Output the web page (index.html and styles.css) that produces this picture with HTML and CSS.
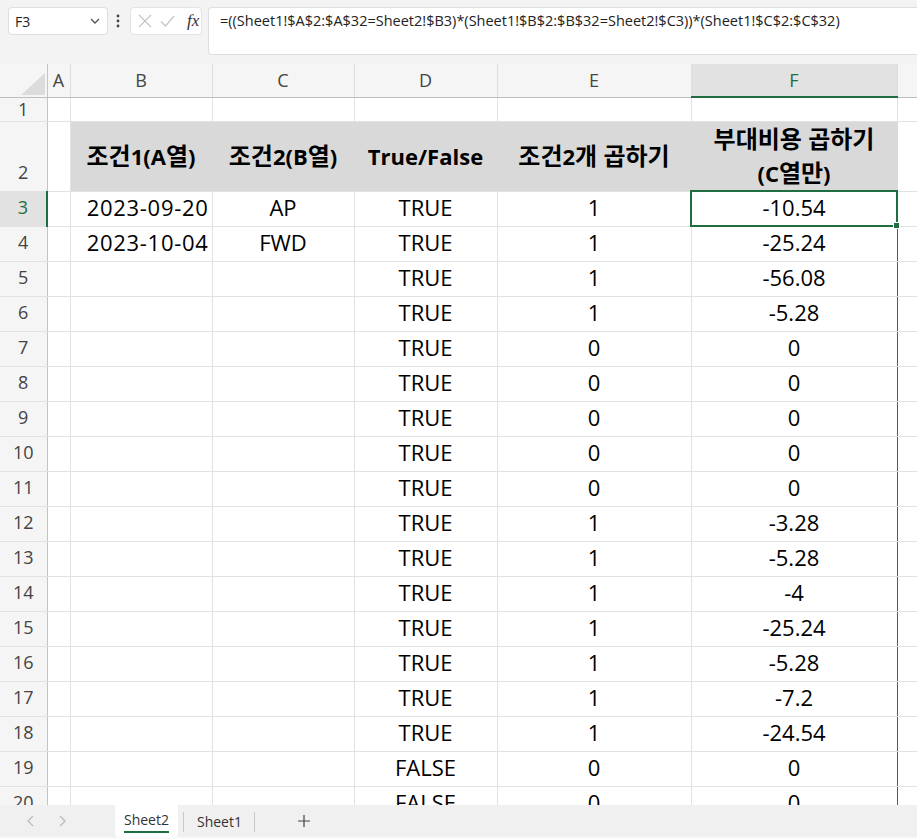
FILE: index.html
```html
<!DOCTYPE html>
<html lang="ko">
<head>
  <meta charset="UTF-8">
  <meta name="viewport" content="width=device-width, initial-scale=1.0">
  <title>Sheet2 - 부대비용 곱하기</title>
  <link rel="stylesheet" href="styles.css">
</head>
<body>
  <div class="topbar">
    <div class="namebox">
      <span>F3</span>
      <svg width="12" height="8" viewBox="0 0 12 8"><path d="M2 2 L6 6 L10 2" fill="none" stroke="#555" stroke-width="1.3"/></svg>
    </div>
    <div class="dots">
      <svg width="4" height="14" viewBox="0 0 4 14"><circle cx="2" cy="2" r="1.4" fill="#444"/><circle cx="2" cy="7" r="1.4" fill="#444"/><circle cx="2" cy="12" r="1.4" fill="#444"/></svg>
    </div>
    <div class="fxbox">
      <svg width="14" height="14" viewBox="0 0 14 14"><path d="M1 1 L13 13 M13 1 L1 13" stroke="#c4c4c4" stroke-width="1.2"/></svg>
      <svg width="15" height="14" viewBox="0 0 15 14"><path d="M1 7.5 L5.5 12 L14 2" fill="none" stroke="#c4c4c4" stroke-width="1.2"/></svg>
      <span class="fx">fx</span>
    </div>
    <div class="formula">=((Sheet1!$A$2:$A$32=Sheet2!$B3)*(Sheet1!$B$2:$B$32=Sheet2!$C3))*(Sheet1!$C$2:$C$32)</div>
  </div>

  <div class="sheet">
    <table class="grid">
      <colgroup>
        <col class="c-row"><col class="c-a"><col class="c-b"><col class="c-c"><col class="c-d"><col class="c-e"><col class="c-f"><col class="c-g">
      </colgroup>
      <thead>
        <tr>
          <th class="corner"><svg width="30" height="26" viewBox="0 0 30 26"><polygon points="28,2 28,24 4,24" fill="#dcdcdc"/></svg></th>
          <th>A</th><th>B</th><th>C</th><th>D</th><th>E</th><th class="sel">F</th><th class="last"></th>
        </tr>
      </thead>
      <tbody>
        <tr class="r1"><th>1</th><td></td><td></td><td></td><td></td><td></td><td></td><td></td></tr>
        <tr class="r2">
          <th>2</th><td></td>
          <td class="hd"><span class="ko">조건</span>1(A<span class="ko">열</span>)</td>
          <td class="hd"><span class="ko">조건</span>2(B<span class="ko">열</span>)</td>
          <td class="hd">True/False</td>
          <td class="hd"><span class="ko">조건</span>2<span class="ko">개 곱하기</span></td>
          <td class="hd"><span class="ko">부대비용 곱하기</span><br>(C<span class="ko">열만</span>)</td>
          <td></td>
        </tr>
        <tr><th class="sel">3</th><td></td><td class="date">2023-09-20</td><td>AP</td><td>TRUE</td><td>1</td><td class="spill active">-10.54</td><td></td></tr>
        <tr><th>4</th><td></td><td class="date">2023-10-04</td><td>FWD</td><td>TRUE</td><td>1</td><td class="spill">-25.24</td><td></td></tr>
        <tr><th>5</th><td></td><td></td><td></td><td>TRUE</td><td>1</td><td class="spill">-56.08</td><td></td></tr>
        <tr><th>6</th><td></td><td></td><td></td><td>TRUE</td><td>1</td><td class="spill">-5.28</td><td></td></tr>
        <tr><th>7</th><td></td><td></td><td></td><td>TRUE</td><td>0</td><td class="spill">0</td><td></td></tr>
        <tr><th>8</th><td></td><td></td><td></td><td>TRUE</td><td>0</td><td class="spill">0</td><td></td></tr>
        <tr><th>9</th><td></td><td></td><td></td><td>TRUE</td><td>0</td><td class="spill">0</td><td></td></tr>
        <tr><th>10</th><td></td><td></td><td></td><td>TRUE</td><td>0</td><td class="spill">0</td><td></td></tr>
        <tr><th>11</th><td></td><td></td><td></td><td>TRUE</td><td>0</td><td class="spill">0</td><td></td></tr>
        <tr><th>12</th><td></td><td></td><td></td><td>TRUE</td><td>1</td><td class="spill">-3.28</td><td></td></tr>
        <tr><th>13</th><td></td><td></td><td></td><td>TRUE</td><td>1</td><td class="spill">-5.28</td><td></td></tr>
        <tr><th>14</th><td></td><td></td><td></td><td>TRUE</td><td>1</td><td class="spill">-4</td><td></td></tr>
        <tr><th>15</th><td></td><td></td><td></td><td>TRUE</td><td>1</td><td class="spill">-25.24</td><td></td></tr>
        <tr><th>16</th><td></td><td></td><td></td><td>TRUE</td><td>1</td><td class="spill">-5.28</td><td></td></tr>
        <tr><th>17</th><td></td><td></td><td></td><td>TRUE</td><td>1</td><td class="spill">-7.2</td><td></td></tr>
        <tr><th>18</th><td></td><td></td><td></td><td>TRUE</td><td>1</td><td class="spill">-24.54</td><td></td></tr>
        <tr><th>19</th><td></td><td></td><td></td><td>FALSE</td><td>0</td><td class="spill">0</td><td></td></tr>
        <tr><th>20</th><td></td><td></td><td></td><td>FALSE</td><td>0</td><td class="spill">0</td><td></td></tr>
      </tbody>
    </table>
  </div>

  <div class="tabbar">
    <div class="nav">
      <svg width="10" height="14" viewBox="0 0 10 14"><path d="M7 2 L2 7 L7 12" fill="none" stroke="#bbb" stroke-width="1.3"/></svg>
      <svg width="10" height="14" viewBox="0 0 10 14"><path d="M3 2 L8 7 L3 12" fill="none" stroke="#bbb" stroke-width="1.3"/></svg>
    </div>
    <div class="tab active"><span>Sheet2</span></div>
    <div class="tab"><span>Sheet1</span></div>
    <div class="add">
      <svg width="14" height="14" viewBox="0 0 14 14"><path d="M7 1 V13 M1 7 H13" stroke="#444" stroke-width="1.2"/></svg>
    </div>
  </div>
</body>
</html>
```

FILE: styles.css
```css
body {
  margin: 0;
  width: 917px;
  height: 839px;
  overflow: hidden;
  background-color: #f3f3f3;
  font-family: "Open Sans", "Noto Sans CJK KR", sans-serif;
  color: #000;
}

/* formula bar */
.topbar {
  display: flex;
  align-items: flex-start;
  height: 64px;
  padding: 7px 0 0 8px;
  box-sizing: border-box;
}
.namebox {
  display: flex;
  align-items: center;
  justify-content: space-between;
  width: 100px;
  height: 28px;
  padding: 0 6px 0 6px;
  box-sizing: border-box;
  background-color: #fff;
  border: 1px solid #dedede;
  border-radius: 4px;
  font-size: 14px;
  color: #222;
}
.dots {
  display: flex;
  align-items: center;
  height: 28px;
  margin: 0 10px 0 8px;
}
.fxbox {
  display: flex;
  align-items: center;
  gap: 8px;
  width: 72px;
  height: 28px;
  padding-left: 7px;
  box-sizing: border-box;
  background-color: #fff;
  border: 1px solid #e3e3e3;
  border-radius: 4px;
}
.fx {
  margin-left: 4px;
  font-family: "Liberation Serif", serif;
  font-style: italic;
  font-size: 17px;
  color: #333;
}
.formula {
  flex: 1;
  height: 48px;
  margin-left: 6px;
  padding: 3px 0 0 11px;
  box-sizing: border-box;
  background-color: #fff;
  border: 1px solid #dedede;
  border-right: none;
  border-radius: 4px 0 0 4px;
  font-size: 14.5px;
  color: #222;
}

/* grid */
.sheet {
  height: 741px;
  overflow: hidden;
  background-color: #fff;
}
.grid {
  border-collapse: collapse;
  table-layout: fixed;
  width: 917px;
}
.c-row { width: 47px; }
.c-a { width: 23px; }
.c-b { width: 142px; }
.c-c { width: 142px; }
.c-d { width: 143px; }
.c-e { width: 194px; }
.c-f { width: 206px; }
.c-g { width: 20px; }

.grid th,
.grid td {
  box-sizing: border-box;
}
.grid thead th {
  height: 33px;
  padding: 0;
  background-color: #f5f5f5;
  border-right: 1px solid #dedede;
  border-bottom: 1px solid #bdbdbd;
  font-weight: normal;
  font-size: 18px;
  line-height: 24px;
  color: #444;
  text-align: center;
}
.grid thead th.corner {
  border-right: 1px solid #c4c4c4;
  text-align: right;
  vertical-align: bottom;
  line-height: 0;
}
.grid thead th.last {
  border-right: none;
}
.grid thead th.sel {
  background-color: #e2e2e2;
  color: #1e6e42;
  border-bottom: 2px solid #1e6e42;
}

.grid tbody th {
  height: 35px;
  padding: 0 0 8px 0;
  background-color: #f5f5f5;
  border-right: 1px solid #c4c4c4;
  border-bottom: 1px solid #e2e2e2;
  font-weight: normal;
  font-size: 18px;
  line-height: 22px;
  color: #444;
  text-align: center;
  vertical-align: bottom;
}
.grid tbody th.sel {
  background-color: #e2e2e2;
  color: #1e6e42;
  border-right: 2px solid #1e6e42;
}

.grid td {
  height: 35px;
  padding: 0 2px 6px 2px;
  border-right: 1px solid #e2e2e2;
  border-bottom: 1px solid #e2e2e2;
  font-size: 22px;
  line-height: 26px;
  text-align: center;
  vertical-align: bottom;
  white-space: nowrap;
  overflow: hidden;
}
.grid tr.r1 td,
.grid tr.r1 th {
  height: 24px;
  line-height: 18px;
  padding-bottom: 3px;
}
.grid tr.r2 td,
.grid tr.r2 th {
  height: 70px;
}
.grid td.hd {
  padding: 0 2px;
  background-color: #d9d9d9;
  border-right-color: #d9d9d9;
  font-weight: bold;
  vertical-align: middle;
  line-height: 34px;
}
.grid td.hd .ko {
  font-size: 24px;
}
.grid td.date {
  text-align: right;
  padding-right: 3px;
  letter-spacing: 0.7px;
}
.grid td.spill {
  border-left: 1px solid #3c5a99;
  border-right: 1px solid #3c5a99;
}
.grid td.active {
  position: relative;
  overflow: visible;
  outline: 2px solid #1e6e42;
  outline-offset: -1px;
}
.grid td.active::after {
  content: "";
  position: absolute;
  right: -3px;
  bottom: -3px;
  width: 5px;
  height: 5px;
  background-color: #1e6e42;
  border: 1px solid #fff;
}

/* sheet tabs */
.tabbar {
  display: flex;
  align-items: stretch;
  height: 32px;
  background-color: #f0f0f0;
  border-bottom: 2px solid #fafafa;
  font-size: 14px;
  color: #333;
}
.nav {
  display: flex;
  align-items: center;
  gap: 21px;
  width: 115px;
  padding-left: 26px;
  box-sizing: border-box;
}
.tab {
  display: flex;
  align-items: center;
  padding: 0 9px;
  position: relative;
}
.tab.active {
  background-color: #fff;
  border-radius: 0 0 4px 4px;
  margin-right: 5px;
}
.tab.active span {
  padding-bottom: 2px;
  border-bottom: 2px solid #1e6e42;
}
.tab:not(.active) {
  margin-left: 5px;
  padding-right: 13px;
}
.tab:not(.active)::before,
.tab:not(.active)::after {
  content: "";
  position: absolute;
  top: 7px;
  height: 20px;
  border-left: 1px solid #c8c8c8;
}
.tab:not(.active)::before {
  left: -5px;
}
.tab:not(.active)::after {
  right: 0;
}
.add {
  display: flex;
  align-items: center;
  margin-left: 42px;
}
```
